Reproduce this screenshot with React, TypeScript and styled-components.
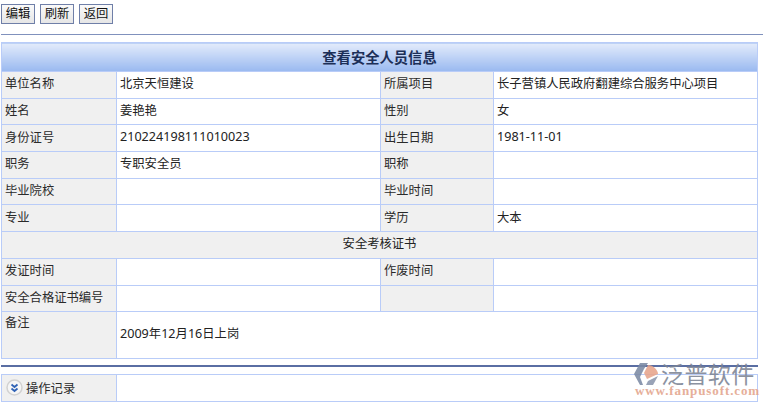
import React from 'react'
import styled, { createGlobalStyle } from 'styled-components';

const FONT = `"Noto Sans", "Noto Sans CJK SC", sans-serif`;
const CJK = `"Noto Sans CJK SC", sans-serif`;
const LINE = '#b9ccf8';

const GlobalStyle = createGlobalStyle`
    html, body {
        margin: 0;
        padding: 0;
        background: #fff;
    }
    body {
        font-family: ${CJK};
        font-size: 12.3px;
        color: #222;
        overflow: hidden;
    }
`;

const Page = styled.div`
    position: relative;
    width: 763px;
    height: 407px;
    overflow: hidden;
`;

const Toolbar = styled.div`
    display: flex;
    gap: 5px;
    height: 20px;
    padding: 4px 0 0 1px;
`;

const ToolButton = styled.button`
    width: 34px;
    height: 20px;
    padding: 0 0 3px;
    box-sizing: border-box;
    border: 1px solid #6f7fa8;
    background: linear-gradient(#fafafa, #e6e6e6);
    font-family: ${CJK};
    font-size: 12.3px;
    line-height: 16px;
    color: #111;
`;

const Rule = styled.div`
    height: 1px;
    margin-left: 1px;
    background: #8091bd;
`;

const TopRule = styled(Rule)`
    margin-top: 10px;
`;

const InfoTable = styled.table`
    width: 757px;
    margin: 7px 0 0 1px;
    border-collapse: collapse;
    table-layout: fixed;
`;

const Title = styled.th`
    height: 26px;
    padding: 0 0 2px;
    border: 1px solid ${LINE};
    background: linear-gradient(#e3ebfb, #99b9f0);
    font-size: 14.3px;
    font-weight: bold;
    color: #1c2f58;
    text-align: center;
`;

const Row = styled.tr<{ $h?: number }>`
    height: ${p => p.$h ?? 26.7}px;
`;

const Label = styled.td<{ $top?: boolean }>`
    padding: ${p => (p.$top ? '1px 0 0 3px' : '0 0 3px 3px')};
    border: 1px solid ${LINE};
    background: #f0f0f0;
    color: #2a2a2a;
    white-space: nowrap;
    vertical-align: ${p => (p.$top ? 'top' : 'middle')};
    line-height: 18px;
`;

const Value = styled.td`
    padding: 0 0 3px 3px;
    border: 1px solid ${LINE};
    background: #fff;
    white-space: nowrap;
    line-height: 18px;
`;

const Section = styled.td`
    padding: 0 0 3px;
    border: 1px solid ${LINE};
    background: #f0f0f0;
    text-align: center;
    line-height: 18px;
`;

const Num = styled.span`
    font-family: ${FONT};
    font-size: 12.6px;
`;

const LogRule = styled.div`
    width: 757px;
    height: 2px;
    margin: 6px 0 0 1px;
    background: #5a6ea3;
`;

const LogBar = styled.div`
    display: flex;
    width: 757px;
    height: 28px;
    margin: 7px 0 0 1px;
    box-sizing: border-box;
    border: 1px solid ${LINE};
    background: #fff;
`;

const LogLabel = styled.div`
    display: flex;
    align-items: center;
    gap: 3px;
    width: 115px;
    padding: 0 0 1px 4px;
    box-sizing: border-box;
    border-right: 1px solid ${LINE};
    background: #f0f0f0;
    color: #2a2a2a;
`;

const Watermark = styled.div`
    position: absolute;
    left: 633px;
    top: 362px;
    width: 124px;
    opacity: 0.88;
`;

const MarkTop = styled.div`
    display: flex;
    align-items: flex-start;
    gap: 2px;
    height: 22px;
`;

const MarkName = styled.div`
    height: 22px;
    font-family: ${CJK};
    font-size: 23px;
    font-weight: 400;
    line-height: 22px;
    letter-spacing: 0.4px;
    color: #7c8494;
    white-space: nowrap;
`;

const MarkUrl = styled.div`
    margin-left: 2px;
    font-family: "Liberation Serif", serif;
    font-size: 13px;
    font-weight: bold;
    line-height: 14px;
    letter-spacing: 0.9px;
    color: #e3a48c;
    white-space: nowrap;
`;

const ChevronIcon: React.FC = () => (
    <svg width="17" height="17" viewBox="0 0 17 17">
        <circle cx="8.5" cy="8.5" r="7.5" fill="#f6f6f6" stroke="#d2d2d2" strokeWidth="1.5" />
        <path d="M5.5 5.5 8.5 8 11.5 5.5M5.5 9.5 8.5 12 11.5 9.5" fill="none" stroke="#2f62b5" strokeWidth="1.8" />
    </svg>
);

const LogoIcon: React.FC = () => (
    <svg width="26" height="24" viewBox="0 0 26 24">
        <path d="M7 1H15L11 7 7 15 10 23H7L1 12Z" fill="#7c8aa5" />
        <path d="M15 3C20 3 25 8 25 12L14 17 11 11Z" fill="#e8a58b" />
        <path d="M15 19 25 14 20 23H13Z" fill="#8b97ae" />
    </svg>
);

const rows: React.ReactNode[][] = [
    ['单位名称', '北京天恒建设', '所属项目', '长子营镇人民政府翻建综合服务中心项目'],
    ['姓名', '姜艳艳', '性别', '女'],
    ['身份证号', <Num>210224198111010023</Num>, '出生日期', <Num>1981-11-01</Num>],
    ['职务', '专职安全员', '职称', ''],
    ['毕业院校', '', '毕业时间', ''],
    ['专业', '', '学历', '大本'],
];

const certRows: React.ReactNode[][] = [
    ['发证时间', '', '作废时间', ''],
    ['安全合格证书编号', '', '', ''],
];

const InfoRow: React.FC<{ cells: React.ReactNode[] }> = ({ cells }) => (
    <Row>
        <Label>{cells[0]}</Label>
        <Value>{cells[1]}</Value>
        <Label>{cells[2]}</Label>
        <Value>{cells[3]}</Value>
    </Row>
);

export const App: React.FC = () => {
    return (
        <Page>
            <GlobalStyle />
            <Toolbar>
                <ToolButton>编辑</ToolButton>
                <ToolButton>刷新</ToolButton>
                <ToolButton>返回</ToolButton>
            </Toolbar>
            <TopRule />
            <InfoTable>
                <colgroup>
                    <col style={{ width: 115 }} />
                    <col style={{ width: 264 }} />
                    <col style={{ width: 113 }} />
                    <col />
                </colgroup>
                <thead>
                    <tr>
                        <Title colSpan={4}>查看安全人员信息</Title>
                    </tr>
                </thead>
                <tbody>
                    {rows.map((cells, index) => (
                        <InfoRow key={index} cells={cells} />
                    ))}
                    <Row>
                        <Section colSpan={4}>安全考核证书</Section>
                    </Row>
                    {certRows.map((cells, index) => (
                        <InfoRow key={index} cells={cells} />
                    ))}
                    <Row $h={47}>
                        <Label $top>备注</Label>
                        <Value colSpan={3}><Num>2009</Num>年<Num>12</Num>月<Num>16</Num>日上岗</Value>
                    </Row>
                </tbody>
            </InfoTable>
            <LogRule />
            <LogBar>
                <LogLabel>
                    <ChevronIcon />
                    操作记录
                </LogLabel>
            </LogBar>
            <Watermark>
                <MarkTop>
                    <LogoIcon />
                    <MarkName>泛普软件</MarkName>
                </MarkTop>
                <MarkUrl>www.fanpusoft.com</MarkUrl>
            </Watermark>
        </Page>
    );
}

export default App
